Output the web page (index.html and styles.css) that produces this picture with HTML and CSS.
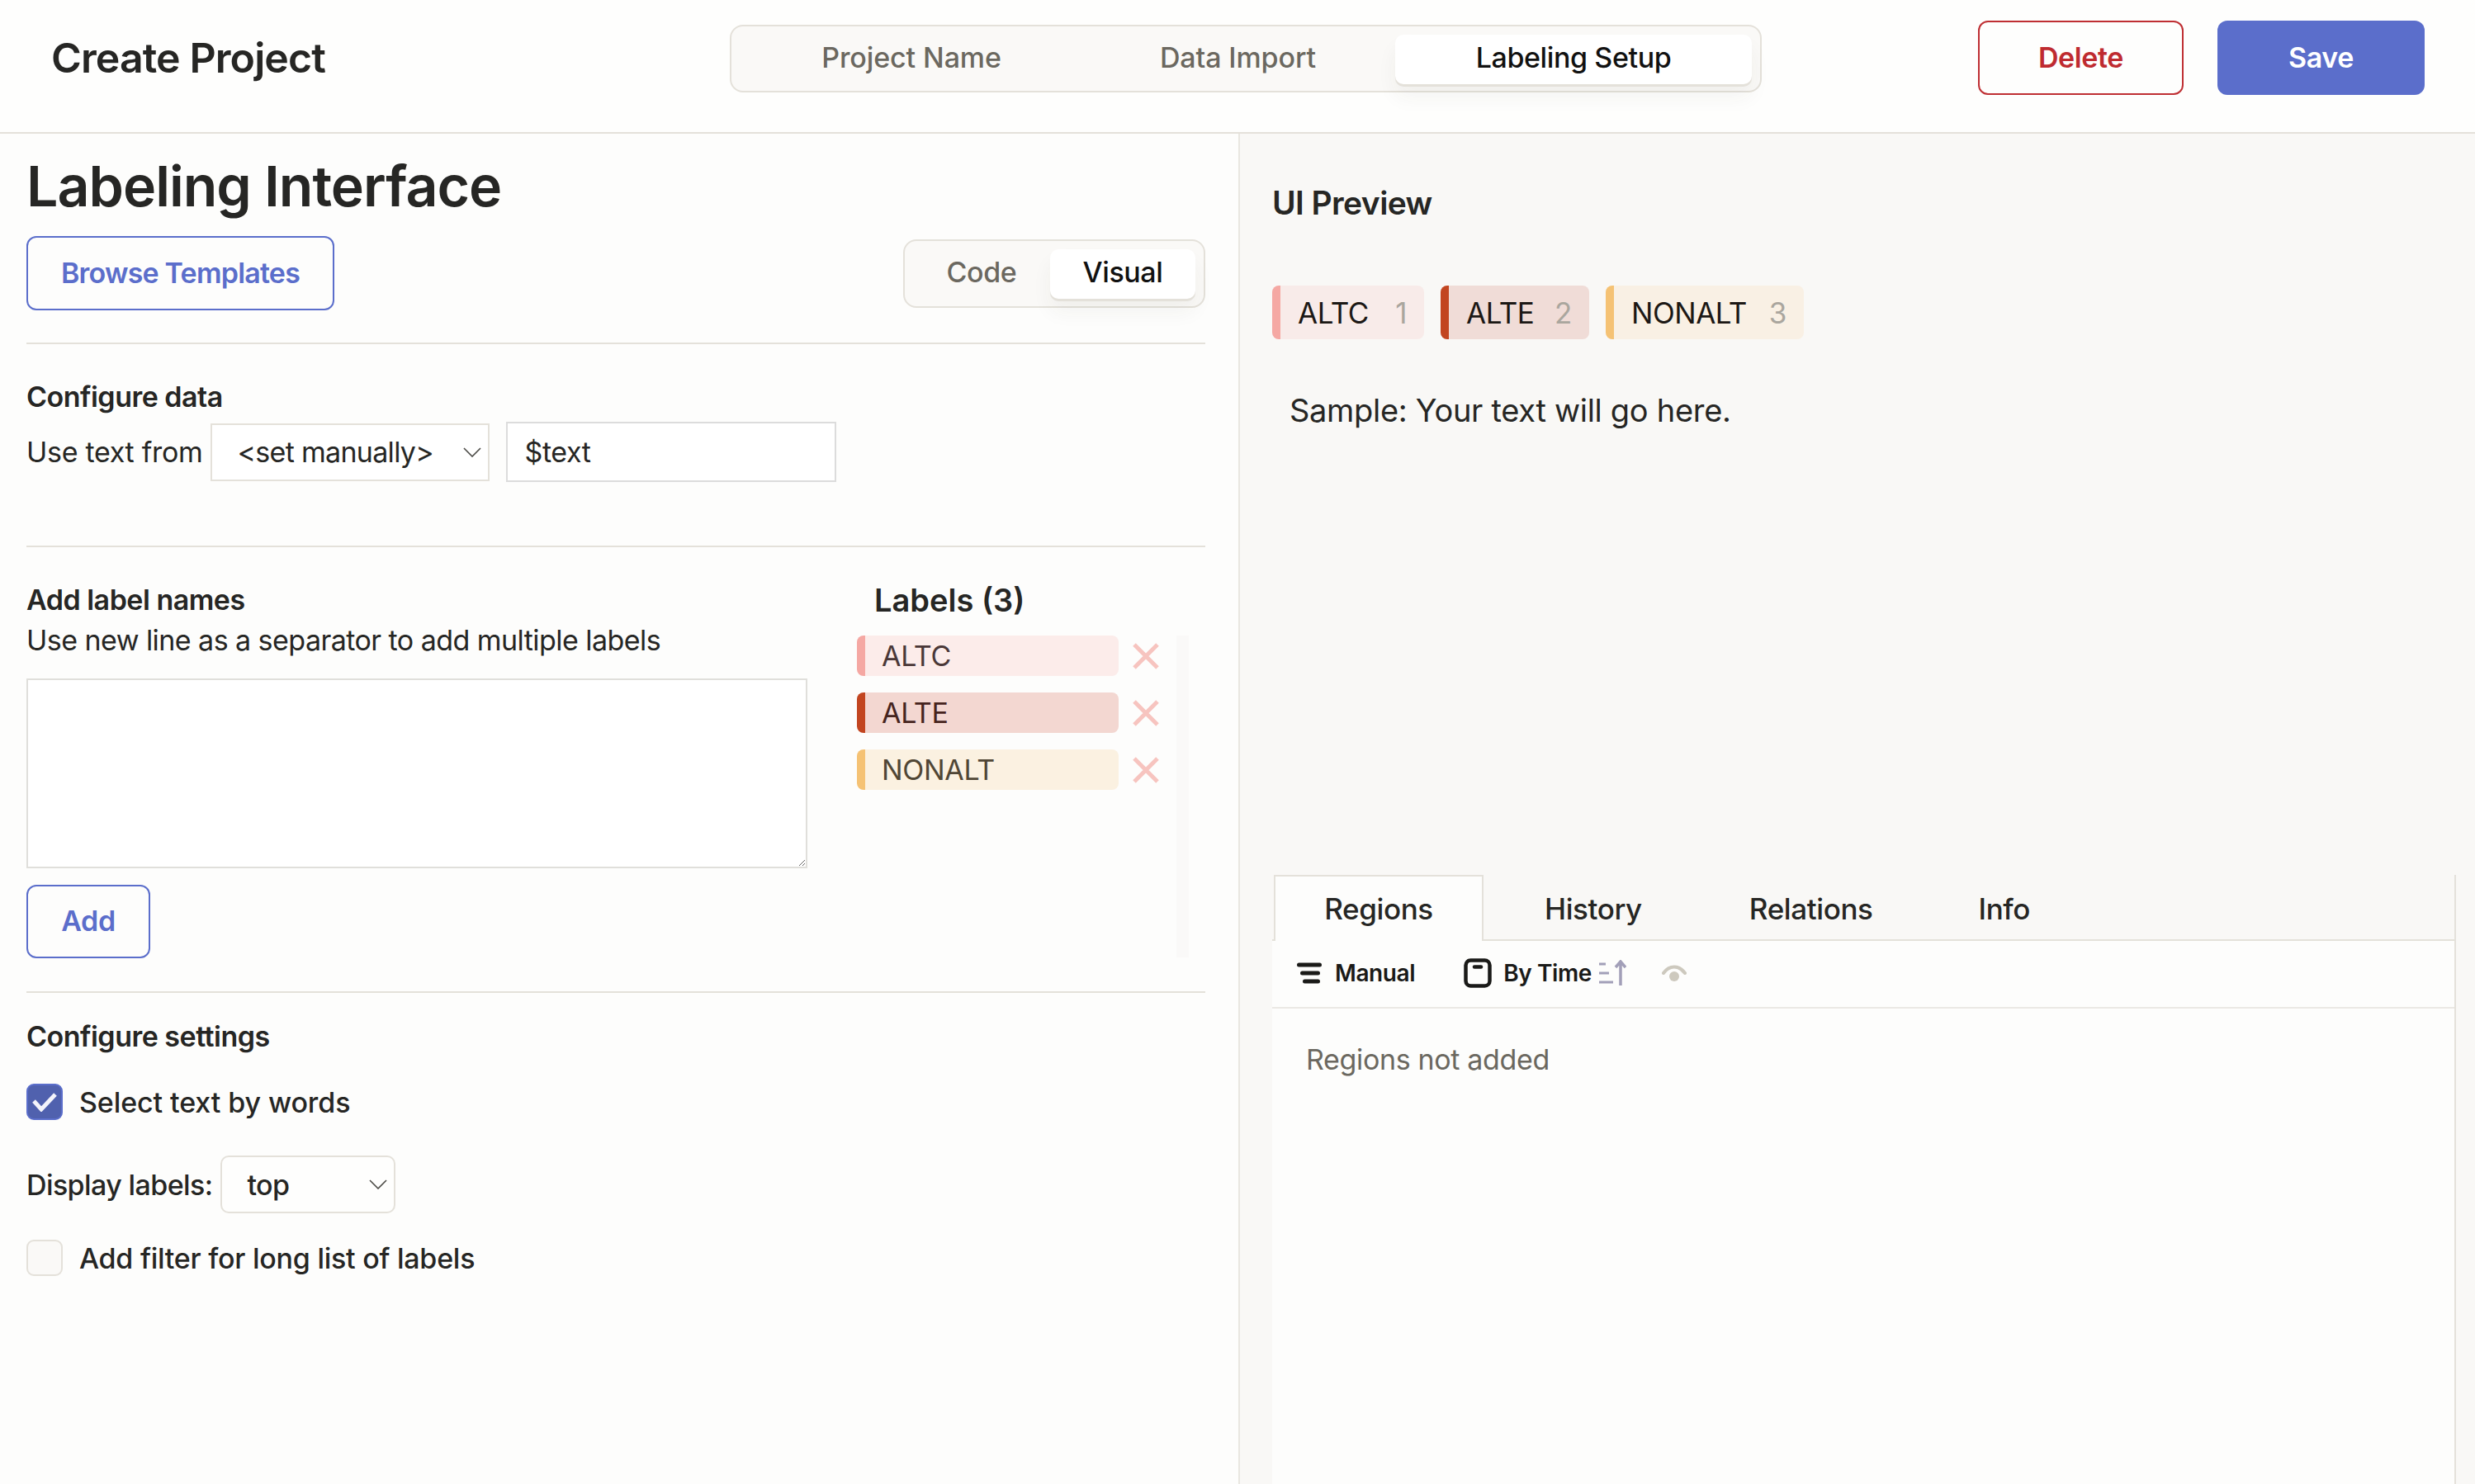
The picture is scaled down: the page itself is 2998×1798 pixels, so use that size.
FILE: index.html
```html
<!DOCTYPE html>
<html lang="en">
<head>
    <meta charset="UTF-8">
    <title>Create Project</title>
    <link rel="stylesheet" href="styles.css">
</head>
<body>
    <header class="topbar">
        <div class="topbar-title">Create Project</div>
        <div class="steps">
            <div class="step step-name">Project Name</div>
            <div class="step step-import">Data Import</div>
            <div class="step step-active">Labeling Setup</div>
        </div>
        <div class="topbar-actions">
            <button class="btn btn-danger">Delete</button>
            <button class="btn btn-primary">Save</button>
        </div>
    </header>
    <main class="columns">
        <section class="config">
            <h1 class="config-title">Labeling Interface</h1>
            <div class="config-bar">
                <button class="btn btn-outline btn-browse">Browse Templates</button>
                <div class="switch">
                    <div class="switch-item">Code</div>
                    <div class="switch-item switch-active">Visual</div>
                </div>
            </div>
            <div class="block block-data">
                <h3 class="block-title">Configure data</h3>
                <div class="data-row">
                    <span>Use text from</span>
                    <div class="select select-data">
                        <span>&lt;set manually&gt;</span>
                        <svg width="22" height="12" viewBox="0 0 22 12"><path d="M1 1l10 10L21 1" fill="none" stroke="#4a4945" stroke-width="1.6"/></svg>
                    </div>
                    <input class="text-input" type="text" value="$text">
                </div>
            </div>
            <div class="block block-labels">
                <div class="labels-form">
                    <h3 class="block-title">Add label names</h3>
                    <p class="hint">Use new line as a separator to add multiple labels</p>
                    <textarea class="label-area"></textarea>
                    <button class="btn btn-outline btn-add">Add</button>
                </div>
                <div class="labels-side">
                    <h3 class="labels-title">Labels (3)</h3>
                    <div class="labels-body">
                        <ul class="label-list">
                            <li class="label-row">
                                <span class="label-chip chip-altc">ALTC</span>
                                <svg class="label-x" width="32" height="32" viewBox="0 0 32 32"><path d="M2 2l28 28M30 2L2 30" stroke="#f7c4bf" stroke-width="5"/></svg>
                            </li>
                            <li class="label-row">
                                <span class="label-chip chip-alte">ALTE</span>
                                <svg class="label-x" width="32" height="32" viewBox="0 0 32 32"><path d="M2 2l28 28M30 2L2 30" stroke="#f7c4bf" stroke-width="5"/></svg>
                            </li>
                            <li class="label-row">
                                <span class="label-chip chip-nonalt">NONALT</span>
                                <svg class="label-x" width="32" height="32" viewBox="0 0 32 32"><path d="M2 2l28 28M30 2L2 30" stroke="#f7c4bf" stroke-width="5"/></svg>
                            </li>
                        </ul>
                        <div class="label-scroll"></div>
                    </div>
                </div>
            </div>
            <div class="block block-settings">
                <h3 class="block-title">Configure settings</h3>
                <div class="check-row check-words">
                    <span class="check check-on">
                        <svg width="32" height="24" viewBox="0 0 32 24"><path d="M3 11l9 10L29 3" fill="none" stroke="#f4f4fb" stroke-width="5"/></svg>
                    </span>
                    <span>Select text by words</span>
                </div>
                <div class="display-row">
                    <span>Display labels:</span>
                    <div class="select select-display">
                        <span>top</span>
                        <svg width="22" height="12" viewBox="0 0 22 12"><path d="M1 1l10 10L21 1" fill="none" stroke="#4a4945" stroke-width="1.6"/></svg>
                    </div>
                </div>
                <div class="check-row check-filter">
                    <span class="check"></span>
                    <span>Add filter for long list of labels</span>
                </div>
            </div>
        </section>
        <section class="preview">
            <h2 class="preview-title">UI Preview</h2>
            <div class="tags">
                <div class="tag tag-altc"><span>ALTC</span><span class="tag-key">1</span></div>
                <div class="tag tag-alte"><span>ALTE</span><span class="tag-key">2</span></div>
                <div class="tag tag-nonalt"><span>NONALT</span><span class="tag-key">3</span></div>
            </div>
            <p class="sample">Sample: Your text will go here.</p>
            <div class="side-panel">
                <div class="tabs">
                    <div class="tab tab-active">Regions</div>
                    <div class="tab tab-history">History</div>
                    <div class="tab tab-relations">Relations</div>
                    <div class="tab tab-info">Info</div>
                </div>
                <div class="panel-body">
                    <div class="toolbar">
                        <div class="tool tool-manual">
                            <svg width="30" height="26" viewBox="0 0 30 26"><path d="M2.500 3h25M6.500 13h19M9.500 23h16" stroke="#1a1a18" stroke-width="5" stroke-linecap="round"/></svg>
                            <span>Manual</span>
                        </div>
                        <div class="tool tool-time">
                            <svg width="34" height="36" viewBox="0 0 34 36"><rect x="2.500" y="2.500" width="29" height="31" rx="6" fill="none" stroke="#1a1a18" stroke-width="4.500"/><path d="M13 10.500h8" stroke="#1a1a18" stroke-width="4.500" stroke-linecap="round"/></svg>
                            <span>By Time</span>
                            <svg class="sort-icon" width="34" height="32" viewBox="0 0 34 32"><path d="M1 5h8M1 16h12M1 27h17" stroke="#a29fb8" stroke-width="3"/><path d="M27 31V3M21 9l6-7 6 7" fill="none" stroke="#a29fb8" stroke-width="3.500"/></svg>
                        </div>
                        <svg class="eye-icon" width="30" height="24" viewBox="0 0 30 24"><path d="M2 12C9 2 21 2 28 12" fill="none" stroke="#cdc9be" stroke-width="4" stroke-linecap="round"/><circle cx="15" cy="16" r="6" fill="#cdc9be"/></svg>
                    </div>
                    <div class="panel-empty">Regions not added</div>
                </div>
            </div>
        </section>
    </main>
</body>
</html>
```

FILE: styles.css
```css
*{
    margin: 0;
    padding: 0;
    box-sizing: border-box;
}
html,body{
    height: 100%;
    overflow: hidden;
}
body{
    font-family: "Inter", "Liberation Sans", sans-serif;
    color: #262624;
    background: #fdfdfc;
    display: flex;
    flex-direction: column;
}
ul{
    list-style: none;
}
button{
    font-family: inherit;
    cursor: pointer;
}

/* top bar */
.topbar{
    height: 162px;
    flex: none;
    display: flex;
    align-items: flex-start;
    border-bottom: 2px solid #e4e1da;
    background: #fefefd;
}
.topbar-title{
    width: 884px;
    padding: 44px 0 0 62px;
    font-size: 50px;
    line-height: 52px;
    font-weight: 600;
    letter-spacing: -0.9px;
}
.steps{
    width: 1250px;
    height: 82px;
    margin-top: 30px;
    display: flex;
    padding: 10px;
    background: #faf9f7;
    border: 2px solid #e4e1da;
    border-radius: 16px;
    font-size: 34px;
    font-weight: 500;
    color: #6b6860;
}
.step{
    height: 60px;
    line-height: 56px;
    text-align: center;
    letter-spacing: -0.1px;
}
.step-name{
    width: 416px;
}
.step-import{
    width: 375px;
}
.step-active{
    width: 432px;
    margin-left: auto;
    color: #111;
    background: #fff;
    border-radius: 10px;
    letter-spacing: -0.4px;
    box-shadow: 0 3px 0 #e4e1da, 0 16px 24px rgba(60,50,30,.05);
}
.topbar-actions{
    margin-left: 262px;
    margin-top: 25px;
    display: flex;
    gap: 41px;
}
.btn{
    height: 90px;
    padding-bottom: 2px;
    border-radius: 12px;
    font-size: 34px;
    font-weight: 600;
    letter-spacing: -0.4px;
}
.btn-danger{
    width: 249px;
    background: #fefefd;
    color: #bf2b30;
    border: 2px solid #bf2f33;
}
.btn-primary{
    width: 251px;
    background: #5b6ecb;
    color: #fff;
    border: none;
}
.btn-outline{
    background: #fdfdfc;
    color: #5b6ecb;
    border: 2px solid #5b6ecb;
}

.columns{
    flex: 1;
    display: flex;
    min-height: 0;
}

/* left column */
.config{
    width: 1500px;
    flex: none;
    padding: 0 40px 0 32px;
}
.config-title{
    height: 124px;
    padding-top: 22px;
    font-size: 68px;
    line-height: 82px;
    font-weight: 600;
    letter-spacing: -1px;
}
.config-bar{
    height: 131px;
    display: flex;
    justify-content: space-between;
    align-items: flex-start;
    border-bottom: 2px solid #e4e1da;
}
.btn-browse{
    width: 373px;
    letter-spacing: -0.8px;
}
.switch{
    width: 366px;
    height: 83px;
    margin-top: 4px;
    padding: 10px;
    display: flex;
    background: #faf9f7;
    border: 2px solid #e4e1da;
    border-radius: 16px;
    font-size: 34px;
    font-weight: 500;
    color: #6b6860;
}
.switch-item{
    flex: 1;
    line-height: 56px;
    text-align: center;
    letter-spacing: -0.4px;
}
.switch-active{
    flex: none;
    width: 176px;
    height: 60px;
    color: #111;
    background: #fff;
    border-radius: 10px;
    box-shadow: 0 3px 0 #e4e1da, 0 16px 24px rgba(60,50,30,.05);
}
.block-title{
    font-size: 34px;
    line-height: 44px;
    font-weight: 600;
    letter-spacing: -0.5px;
}
.block-data{
    height: 246px;
    padding-top: 42px;
    border-bottom: 2px solid #e4e1da;
}
.data-row{
    margin-top: 8px;
    display: flex;
    align-items: center;
    font-size: 34px;
    letter-spacing: -0.3px;
}
.select{
    display: flex;
    justify-content: space-between;
    align-items: center;
    background: #fff;
    border: 2px solid #e4e1da;
    font-size: 34px;
    color: #262624;
}
.select-data{
    width: 338px;
    height: 70px;
    margin-left: 10px;
    padding: 0 8px 0 30px;
    letter-spacing: -0.7px;
}
.text-input{
    width: 400px;
    height: 73px;
    margin-left: 20px;
    padding: 0 20px;
    background: #fff;
    border: 2px solid #dcdcdc;
    outline: none;
    font-family: inherit;
    font-size: 34px;
    letter-spacing: -0.4px;
    color: #262624;
}
.block-labels{
    height: 540px;
    padding-top: 42px;
    display: flex;
    border-bottom: 2px solid #e4e1da;
}
.labels-form{
    width: 1006px;
    flex: none;
}
.hint{
    margin-top: 5px;
    font-size: 34px;
    line-height: 44px;
    letter-spacing: -0.55px;
}
.label-area{
    display: block;
    width: 946px;
    height: 230px;
    margin-top: 24px;
    background: #fff;
    border: 2px solid #e0dfdb;
    outline: none;
}
.btn-add{
    display: block;
    width: 150px;
    height: 89px;
    margin-top: 20px;
}
.labels-title{
    padding-left: 21px;
    font-size: 38px;
    line-height: 44px;
    font-weight: 600;
}
.labels-body{
    display: flex;
    margin-top: 21px;
}
.label-list{
    width: 387px;
    flex: none;
}
.label-row{
    display: flex;
    align-items: center;
    gap: 17px;
    margin-bottom: 20px;
}
.label-chip{
    width: 317px;
    height: 49px;
    padding-left: 20px;
    border-left: 10px solid;
    border-radius: 8px;
    font-size: 34px;
    line-height: 49px;
    letter-spacing: -0.3px;
}
.chip-altc{
    background: #fcecea;
    border-color: #f5a8a3;
    color: #4a3838;
}
.chip-alte{
    background: #f3d7d1;
    border-color: #c24520;
    color: #46241e;
}
.chip-nonalt{
    background: #fbf1e1;
    border-color: #f5c274;
    color: #504635;
}
.label-scroll{
    width: 15px;
    height: 390px;
    background: #faf9f8;
}

/* bottom settings */
.block-settings{
    padding-top: 31px;
    font-size: 34px;
    font-weight: 500;
}
.check-row{
    display: flex;
    align-items: center;
    gap: 20px;
    letter-spacing: -0.1px;
}
.check-words{
    margin-top: 35px;
}
.check-filter{
    letter-spacing: -0.25px;
}
.check{
    width: 44px;
    height: 44px;
    display: flex;
    align-items: center;
    justify-content: center;
    background: #faf9f7;
    border: 2px solid #e4e1da;
    border-radius: 9px;
}
.check-on{
    background: #5061ae;
    border-color: #5b6ecb;
}
.display-row{
    margin-top: 43px;
    margin-bottom: 32px;
    display: flex;
    align-items: center;
    gap: 10px;
    letter-spacing: -0.6px;
}
.select-display{
    width: 212px;
    height: 70px;
    padding: 0 8px 0 30px;
    border-radius: 10px;
    background: #fefefd;
}

/* right column */
.preview{
    flex: 1;
    min-width: 0;
    padding: 0 23px 0 39px;
    background: #f9f8f6;
    border-left: 2px solid #e9e7e1;
    display: flex;
    flex-direction: column;
}
.preview-title{
    height: 184px;
    padding-top: 60px;
    font-size: 39px;
    line-height: 48px;
    font-weight: 600;
    letter-spacing: -0.6px;
}
.tags{
    display: flex;
    gap: 20px;
}
.tag{
    height: 65px;
    display: flex;
    justify-content: space-between;
    align-items: center;
    padding: 0 21px 0 21px;
    border-left: 10px solid;
    border-radius: 8px;
    font-size: 35px;
    letter-spacing: -0.45px;
    color: #1c1815;
}
.tag-altc{
    width: 184px;
    background: #f8ebe9;
    border-color: #f5a8a3;
}
.tag-alte{
    width: 180px;
    background: #f0dcd7;
    border-color: #c24520;
}
.tag-nonalt{
    width: 240px;
    background: #f9f0e4;
    border-color: #f5c274;
}
.tag-key{
    color: #aaa69e;
}
.sample{
    margin-top: 59px;
    padding-left: 21px;
    font-size: 38px;
    line-height: 54px;
    letter-spacing: -0.3px;
}
.side-panel{
    flex: 1;
    margin-top: 536px;
    display: flex;
    flex-direction: column;
    min-height: 0;
}
.tabs{
    height: 80px;
    flex: none;
    display: flex;
    border-bottom: 2px solid #e4e1da;
    border-right: 2px solid #e4e1da;
    font-size: 35px;
    font-weight: 500;
    letter-spacing: -0.4px;
}
.tab{
    line-height: 82px;
}
.tab-active{
    width: 254px;
    height: 80px;
    text-align: center;
    background: #fdfdfc;
    border: 2px solid #e4e1da;
    border-bottom: none;
    margin-left: 2px;
    line-height: 78px;
}
.tab-history{
    margin-left: 74px;
}
.tab-relations{
    margin-left: 130px;
}
.tab-info{
    margin-left: 128px;
}
.panel-body{
    flex: 1;
    background: #fdfdfc;
    border-right: 2px solid #e4e1da;
}
.toolbar{
    height: 82px;
    display: flex;
    align-items: center;
    padding: 0 0 3px 30px;
    border-bottom: 2px solid #ebe9e4;
    font-size: 28px;
    font-weight: 600;
    letter-spacing: -0.4px;
    color: #1a1a18;
}
.tool{
    display: flex;
    align-items: center;
}
.tool-manual{
    gap: 16px;
}
.tool-time{
    margin-left: 59px;
    gap: 14px;
}
.sort-icon{
    margin-left: -6px;
}
.eye-icon{
    margin-left: 43px;
}
.panel-empty{
    padding: 39px 0 0 41px;
    font-size: 34px;
    line-height: 46px;
    color: #6b6860;
    letter-spacing: -0.35px;
}
```
